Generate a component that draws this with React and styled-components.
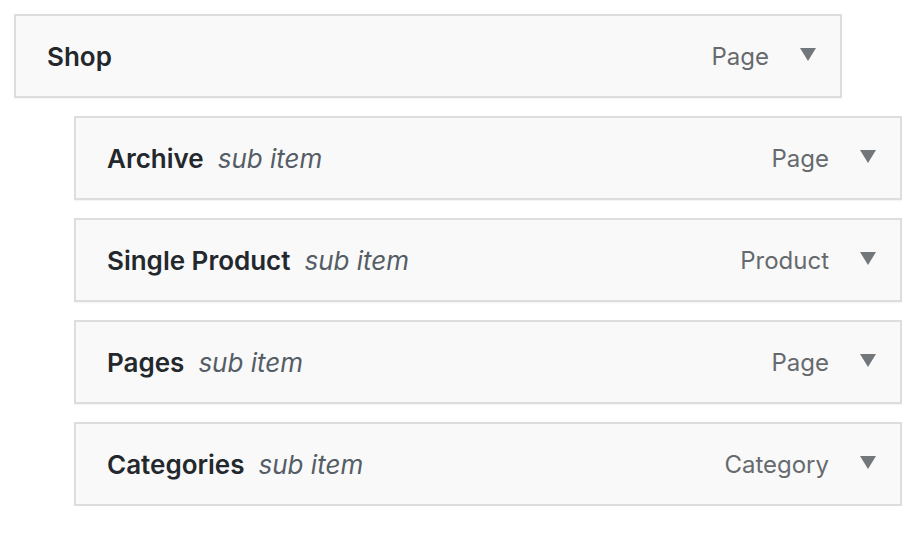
import styled, { createGlobalStyle } from 'styled-components'

const GlobalStyle = createGlobalStyle`
    body {
        margin: 0;
        background: #fff;
        font-family: Inter, "Noto Sans", sans-serif;
    }
`
const Menu = styled.div`
    display: flex;
    flex-direction: column;
    gap: 18px;
    padding: 14px 0 0 14px;
`
const Item = styled.div`
    box-sizing: border-box;
    width: 828px;
    height: 84px;
    margin-left: ${props => props.$depth * 60}px;
    display: flex;
    align-items: center;
    padding: 1px 24px 0 31px;
    background: #f9f9f9;
    border: 2px solid #dddddd;
    box-shadow: 0 1px 1px rgba(0,0,0,0.04);
`
const Title = styled.span`
    font-size: 26px;
    font-weight: 600;
    color: #23282d;
`
const Sub = styled.span`
    margin-left: 14px;
    font-size: 26px;
    font-style: italic;
    color: #555d66;
`
const Type = styled.span`
    margin-left: auto;
    font-size: 24px;
    color: #666a6e;
`
const Arrow = styled.svg`
    width: 16px;
    height: 13px;
    margin-left: 31px;
    margin-top: -5px;
`

const items = [
    { title: 'Shop', type: 'Page', depth: 0 },
    { title: 'Archive', type: 'Page', depth: 1 },
    { title: 'Single Product', type: 'Product', depth: 1 },
    { title: 'Pages', type: 'Page', depth: 1 },
    { title: 'Categories', type: 'Category', depth: 1 },
]

const App = () => {
  return (
    <>
      <GlobalStyle />
      <Menu>
        {items.map(item => (
          <Item key={item.title} $depth={item.depth}>
            <Title>{item.title}</Title>
            {item.depth > 0 && <Sub>sub item</Sub>}
            <Type>{item.type}</Type>
            <Arrow viewBox="0 0 16 13">
              <polygon points="0,0 16,0 8,13" fill="#72777c" />
            </Arrow>
          </Item>
        ))}
      </Menu>
    </>
  )
}

export default App
